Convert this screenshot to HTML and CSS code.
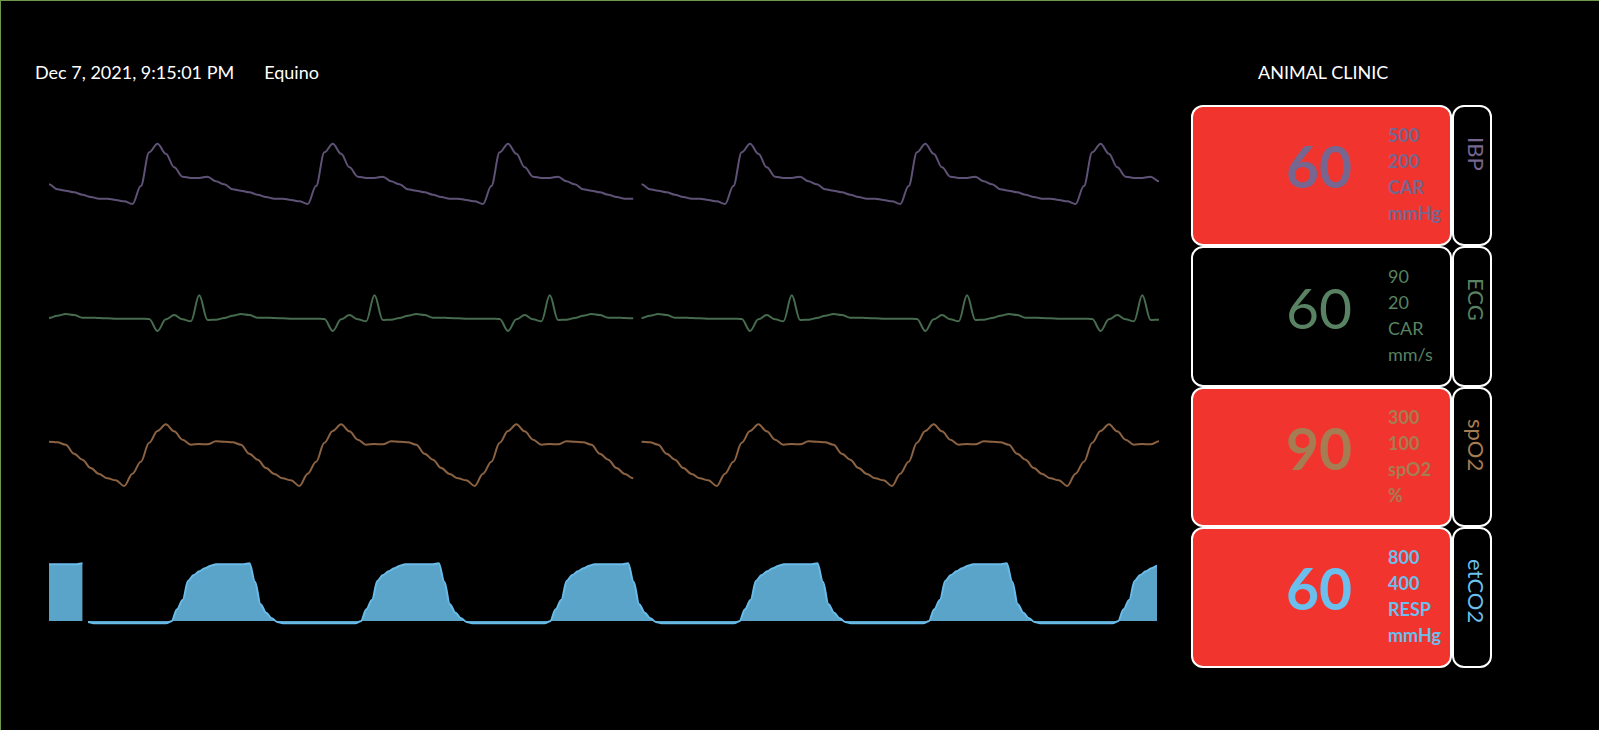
FILE: index.html
```html
<!DOCTYPE html>
<html lang="en">
<head>
<meta charset="utf-8">
<title>Animal Clinic Monitor</title>
<link rel="stylesheet" href="styles.css">
</head>
<body>
<main class="monitor">
  <header class="bar">
    <time class="clock" datetime="2021-12-07T21:15:01">Dec 7, 2021, 9:15:01 PM</time>
    <span class="species">Equino</span>
    <h1 class="clinic">ANIMAL CLINIC</h1>
  </header>
  <section class="channels">
    <article class="channel ibp alarm">
      <svg class="wave" viewBox="0 0 1110 140" preserveAspectRatio="none" data-wave="ibp" role="img" aria-label="IBP waveform"></svg>
      <div class="panel">
        <strong class="value">60</strong>
        <ul class="limits"><li>500</li><li>200</li><li>CAR</li><li>mmHg</li></ul>
      </div>
      <h2 class="label">IBP</h2>
    </article>
    <article class="channel ecg">
      <svg class="wave" viewBox="0 0 1110 140" preserveAspectRatio="none" data-wave="ecg" role="img" aria-label="ECG waveform"></svg>
      <div class="panel">
        <strong class="value">60</strong>
        <ul class="limits"><li>90</li><li>20</li><li>CAR</li><li>mm/s</li></ul>
      </div>
      <h2 class="label">ECG</h2>
    </article>
    <article class="channel spo2 alarm">
      <svg class="wave" viewBox="0 0 1110 140" preserveAspectRatio="none" data-wave="spo2" role="img" aria-label="spO2 waveform"></svg>
      <div class="panel">
        <strong class="value">90</strong>
        <ul class="limits"><li>300</li><li>100</li><li>spO2</li><li>%</li></ul>
      </div>
      <h2 class="label">spO2</h2>
    </article>
    <article class="channel etco2 alarm">
      <svg class="wave" viewBox="0 0 1110 140" preserveAspectRatio="none" data-wave="etco2" role="img" aria-label="etCO2 waveform"></svg>
      <div class="panel">
        <strong class="value">60</strong>
        <ul class="limits"><li>800</li><li>400</li><li>RESP</li><li>mmHg</li></ul>
      </div>
      <h2 class="label">etCO2</h2>
    </article>
  </section>
</main>
<script src="waves.js"></script>
</body>
</html>
```
FILE: styles.css
```css
* { box-sizing: border-box; }

body {
  margin: 0;
  background: #000;
  color: #fff;
  font-family: Lato, "Noto Sans", sans-serif;
  font-size: 18px;
}

.monitor {
  min-height: 100vh;
  border-top: 1px solid #6a994e;
  border-left: 1px solid #6a994e;
  padding: 58px 107px 48px 34px;
}

.bar {
  display: grid;
  grid-template-columns: auto 1fr 234px;
  column-gap: 30px;
  line-height: 27px;
  margin-bottom: 19px;
}

.clinic {
  margin: 0;
  font-size: inherit;
  font-weight: 400;
}

.channels {
  display: grid;
  grid-auto-rows: 1fr;
  min-height: 563px;
  padding-left: 14px;
}

.channel {
  display: grid;
  grid-template-columns: 1fr 261px 40px;
  color: var(--tone);
}

.ibp { --tone: #77668f; --trace: #5f5277; }
.ecg { --tone: #588261; --trace: #466b4e; }
.spo2 { --tone: #a67c52; --trace: #8b6242; }
.etco2 { --tone: #6bbfed; --trace: #69bbe9; }

.wave {
  display: block;
  width: calc(100% - 32px);
  height: 140px;
}

.trace {
  fill: none;
  stroke: var(--trace);
  stroke-width: 2;
}

.area { fill: #5ba4c9; }

.panel,
.label {
  border: 2px solid #fff;
  border-radius: 12px;
}

.panel {
  display: grid;
  grid-template-columns: 1fr 62px;
  column-gap: 36px;
  align-items: start;
  padding-top: 15px;
}

.value {
  justify-self: end;
  margin-top: 9px;
  font-size: 57px;
  line-height: 70px;
  font-weight: 400;
}

.limits {
  list-style: none;
  margin: 0;
  padding: 0;
  line-height: 26px;
}

.alarm .panel { background: #f2342e; }
.alarm .value,
.alarm .limits { font-weight: 700; }

.label {
  margin: 0;
  padding-top: 30px;
  font-size: 22px;
  font-weight: 400;
  line-height: 28px;
  writing-mode: vertical-rl;
}
```
FILE: waves.js
```js
const SVG_NS = 'http://www.w3.org/2000/svg';
const STEP = 1110 / 133;

// One beat per channel, in thirds of a unit; offset is the top of the trace.
const beats = {
  ibp: { offset: 15, data: [193, 208, 212, 217, 224, 231, 236, 236, 240, 244, 252, 198, 97, 71, 101, 142, 170, 174, 174, 170, 184] },
  ecg: { offset: 34, data: [114, 107, 102, 105, 113, 113, 114, 115, 116, 116, 116, 116, 117, 153, 118, 105, 118, 124, 46, 120, 119] },
  spo2: { offset: 24, data: [92, 94, 101, 128, 146, 171, 189, 202, 208, 225, 188, 152, 95, 60, 40, 61, 86, 101, 99, 100, 91] }
};

function smooth(points) {
  return points.map(([x, y], i) => {
    if (i === 0) return `M${x} ${y}`;
    const [px, py] = points[i - 1];
    const pull = (x - px) * 0.35;
    return `C${px + pull} ${py} ${x - pull} ${y} ${x} ${y}`;
  }).join('');
}

function draw(svg, d, className) {
  const path = document.createElementNS(SVG_NS, 'path');
  path.setAttribute('d', d);
  path.setAttribute('class', className);
  svg.append(path);
}

for (const [name, { offset, data }] of Object.entries(beats)) {
  const svg = document.querySelector(`[data-wave="${name}"]`);
  for (const [start, count] of [[0, 71], [71, 63]]) {
    const points = Array.from({ length: count }, (_, i) =>
      [(start + i) * STEP, offset + data[i % data.length] / 3]);
    draw(svg, smooth(points), 'trace');
  }
}

// Capnogram: a breath lasts 34 samples.
const breath = [216, ...Array(13).fill(220), 220, 214, 178, 150, 92, 75, 64, 55, 47, 43, 43, 43, 43, 43, 43, 40, 95, 163, 188, 205];
const capno = document.querySelector('[data-wave="etco2"]');
const capnoStep = 1108 / 199;
const baseline = 23 + 213 / 3;
const runs = [
  [0, [43, 43, 43, 43, 43, 43, 40]],
  [7, Array.from({ length: 193 }, (_, i) => breath[i % 34])]
];
for (const [start, values] of runs) {
  const points = values.map((v, i) => [(start + i) * capnoStep, 23 + v / 3]);
  const line = smooth(points);
  const last = points[points.length - 1][0];
  draw(capno, `${line}L${last} ${baseline}H${points[0][0]}Z`, 'area');
  draw(capno, line, 'trace');
}
```
